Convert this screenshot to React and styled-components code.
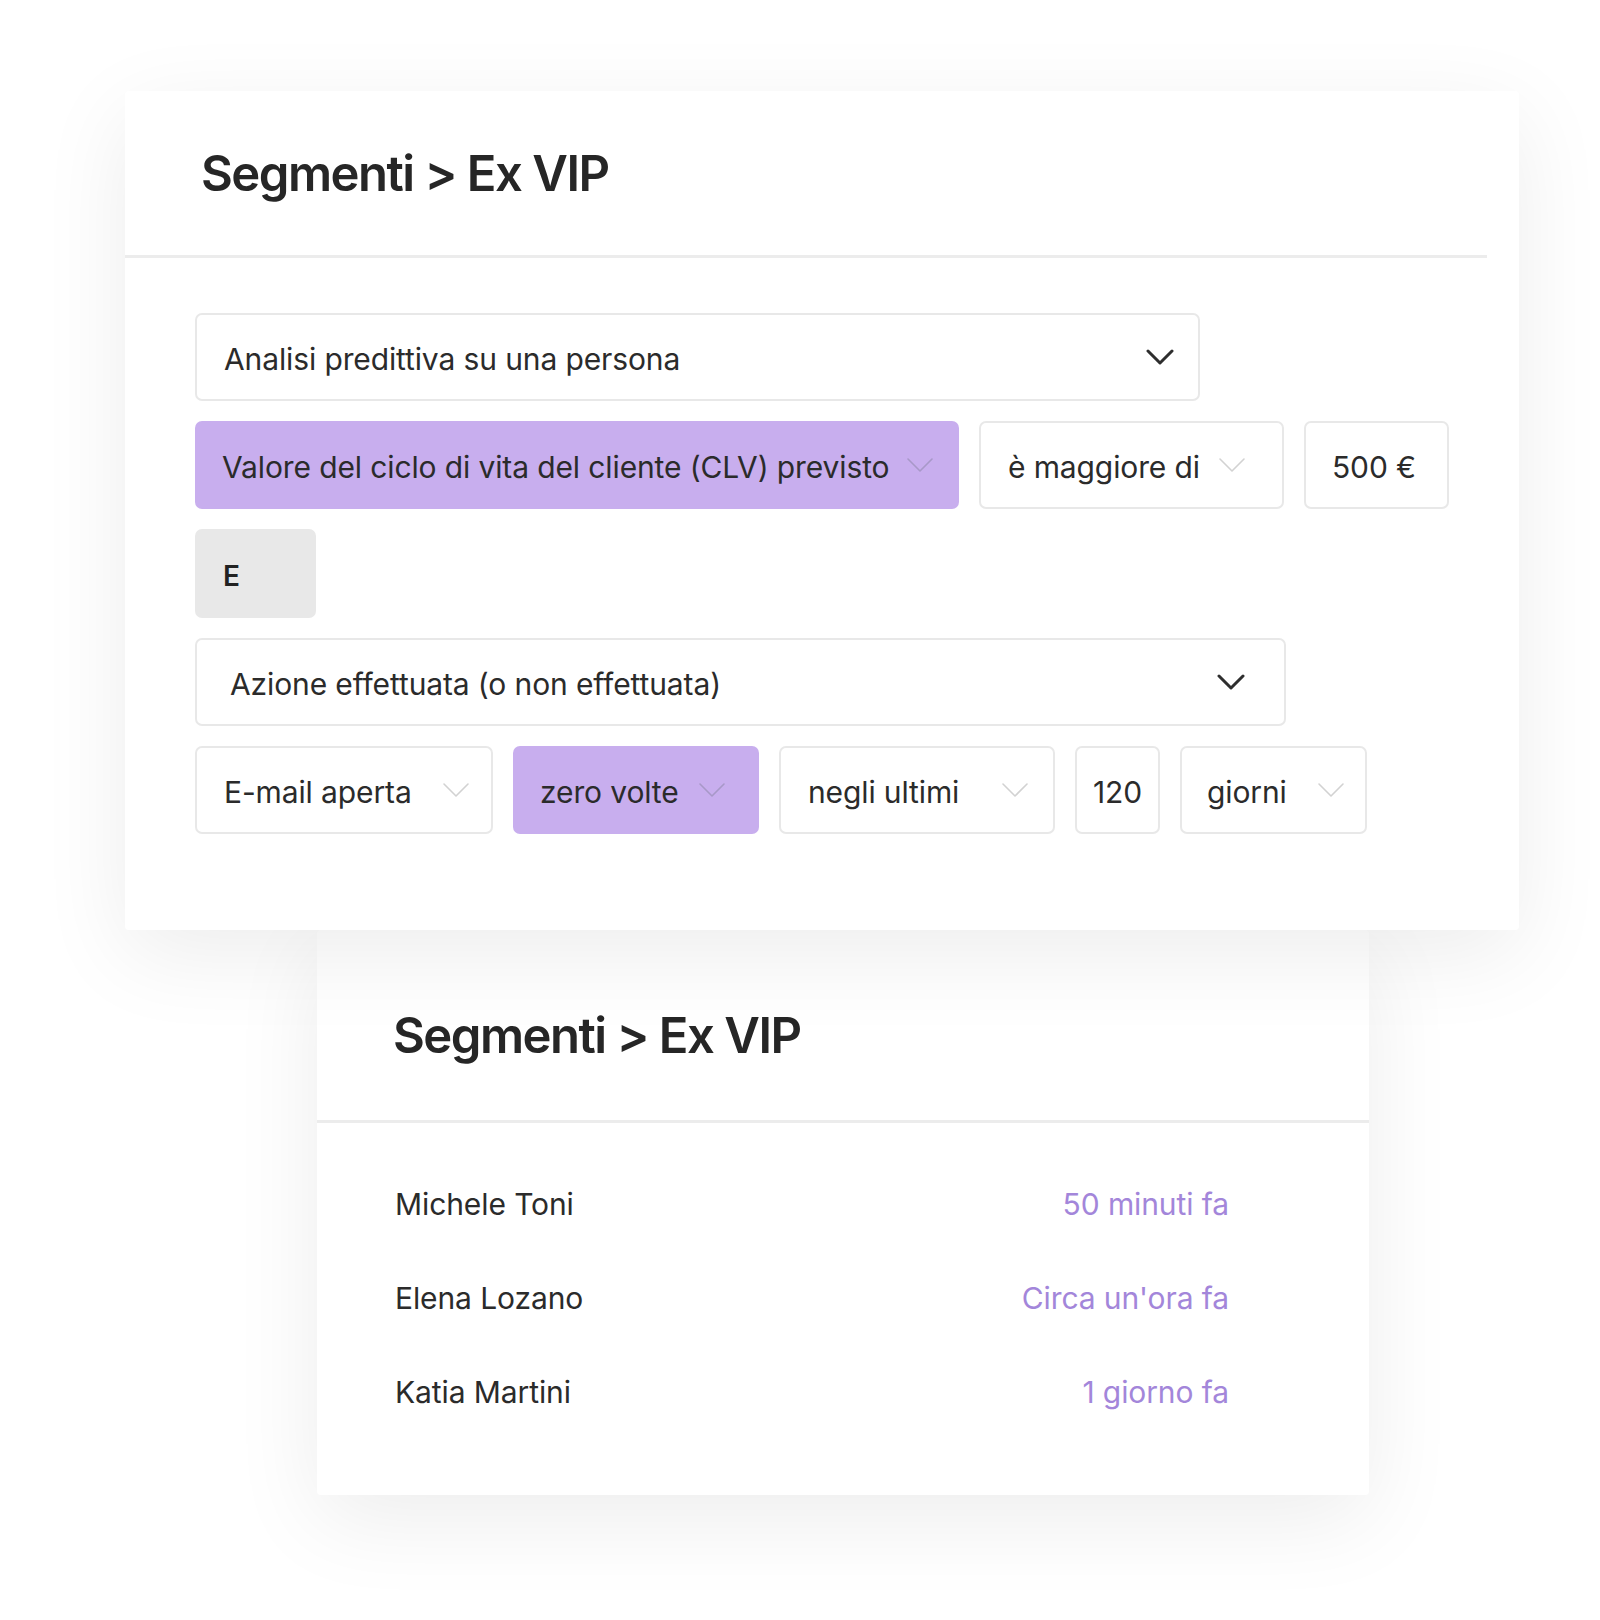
import React from 'react';
import styled, { createGlobalStyle } from 'styled-components';

const GlobalStyle = createGlobalStyle`
  html, body {
    margin: 0;
    padding: 0;
    background: #ffffff;
  }
  body {
    font-family: Inter, "Liberation Sans", sans-serif;
    color: #2b2b2b;
  }
`;

const Page = styled.div`
  width: 1600px;
  height: 1620px;
  box-sizing: border-box;
  padding: 91px 0 0 125px;
  display: flex;
  flex-direction: column;
  align-items: flex-start;
`;

const Card = styled.section`
  position: relative;
  z-index: ${p => (p.$front ? 2 : 1)};
  width: ${p => p.$w}px;
  height: ${p => p.$h}px;
  margin-left: ${p => p.$ml || 0}px;
  background: #ffffff;
  border-radius: 4px;
  box-shadow: 0 24px 90px rgba(0, 0, 0, 0.075);
  display: flex;
  flex-direction: column;
`;

const Header = styled.header`
  height: ${p => p.$h}px;
  box-sizing: border-box;
  padding: ${p => p.$pt || 0}px 0 0 ${p => p.$pl}px;
  display: flex;
  align-items: center;
`;

const Title = styled.h1`
  margin: 0;
  font-size: 49px;
  font-weight: 600;
  letter-spacing: -1.5px;
  color: #262626;
`;

const Divider = styled.div`
  height: 3px;
  background: #ececec;
  margin-right: ${p => p.$mr || 0}px;
`;

const Builder = styled.div`
  padding: 55px 0 0 70px;
  display: flex;
  flex-direction: column;
  gap: 20px;
`;

const Row = styled.div`
  display: flex;
  gap: 20px;
`;

const Select = styled.div`
  width: ${p => p.$w}px;
  height: 88px;
  box-sizing: border-box;
  padding: 4px ${p => p.$pr || 24}px 0 ${p => p.$pl || 27}px;
  border: ${p => (p.$accent ? 'none' : '2px solid #e8e8e8')};
  border-radius: 7px;
  background: ${p => (p.$accent ? '#c8aeee' : '#ffffff')};
  display: flex;
  align-items: center;
  font-size: 30px;
  letter-spacing: -0.12px;
  color: #2b2b2b;
  white-space: nowrap;
`;

const Chevron = styled.svg`
  margin-left: auto;
  margin-top: -4px;
  flex: none;
`;

const Joiner = styled.div`
  width: 121px;
  height: 89px;
  box-sizing: border-box;
  padding: 4px 0 0 28px;
  border-radius: 7px;
  background: #e8e8e8;
  display: flex;
  align-items: center;
  font-size: 28px;
  font-weight: 600;
  color: #222;
`;

const List = styled.ul`
  list-style: none;
  margin: 0;
  padding: 63px 140px 0 78px;
  display: flex;
  flex-direction: column;
  gap: 58px;
`;

const Item = styled.li`
  display: flex;
  justify-content: space-between;
  align-items: baseline;
  font-size: 30px;
  letter-spacing: -0.1px;
  line-height: 36px;
`;

const Name = styled.span`
  color: #2b2b2b;
`;

const Time = styled.span`
  color: #a386da;
`;

function Arrow({ tone }) {
  const strong = tone === 'dark';
  const color = tone === 'dark' ? '#2e2e2e' : tone === 'accent' ? '#a898c8' : '#d2d2d2';
  return (
    <Chevron width="28" height="16" viewBox="0 0 28 16">
      <path
        d="M2 2 L14 14 L26 2"
        fill="none"
        stroke={color}
        strokeWidth={strong ? 3 : 1.6}
        strokeLinecap="round"
        strokeLinejoin="round"
      />
    </Chevron>
  );
}

const people = [
  { name: 'Michele Toni', when: '50 minuti fa' },
  { name: 'Elena Lozano', when: "Circa un'ora fa" },
  { name: 'Katia Martini', when: '1 giorno fa' },
];

export default function App() {
  return (
    <>
      <GlobalStyle />
      <Page>
        <Card $front $w={1394} $h={839}>
          <Header $h={164} $pl={76}>
            <Title>Segmenti &gt; Ex VIP</Title>
          </Header>
          <Divider $mr={32} />
          <Builder>
            <Select $w={1005} $pr={24}>
              Analisi predittiva su una persona
              <Arrow tone="dark" />
            </Select>
            <Row>
              <Select $accent $w={764} $pr={25}>
                Valore del ciclo di vita del cliente (CLV) previsto
                <Arrow tone="accent" />
              </Select>
              <Select $w={305} $pr={36}>
                è maggiore di
                <Arrow />
              </Select>
              <Select $w={145} $pl={26}>500 €</Select>
            </Row>
            <Joiner>E</Joiner>
            <Select $w={1091} $pl={33} $pr={39}>
              Azione effettuata (o non effettuata)
              <Arrow tone="dark" />
            </Select>
            <Row>
              <Select $w={298} $pr={21}>
                E-mail aperta
                <Arrow />
              </Select>
              <Select $accent $w={246} $pl={27} $pr={33}>
                zero volte
                <Arrow tone="accent" />
              </Select>
              <Select $w={276} $pr={24}>
                negli ultimi
                <Arrow />
              </Select>
              <Select $w={85} $pl={16}>120</Select>
              <Select $w={187} $pl={25} $pr={20}>
                giorni
                <Arrow />
              </Select>
            </Row>
          </Builder>
        </Card>
        <Card $w={1052} $h={565} $ml={192}>
          <Header $h={190} $pt={20} $pl={76}>
            <Title>Segmenti &gt; Ex VIP</Title>
          </Header>
          <Divider />
          <List>
            {people.map(p => (
              <Item key={p.name}>
                <Name>{p.name}</Name>
                <Time>{p.when}</Time>
              </Item>
            ))}
          </List>
        </Card>
      </Page>
    </>
  );
}
